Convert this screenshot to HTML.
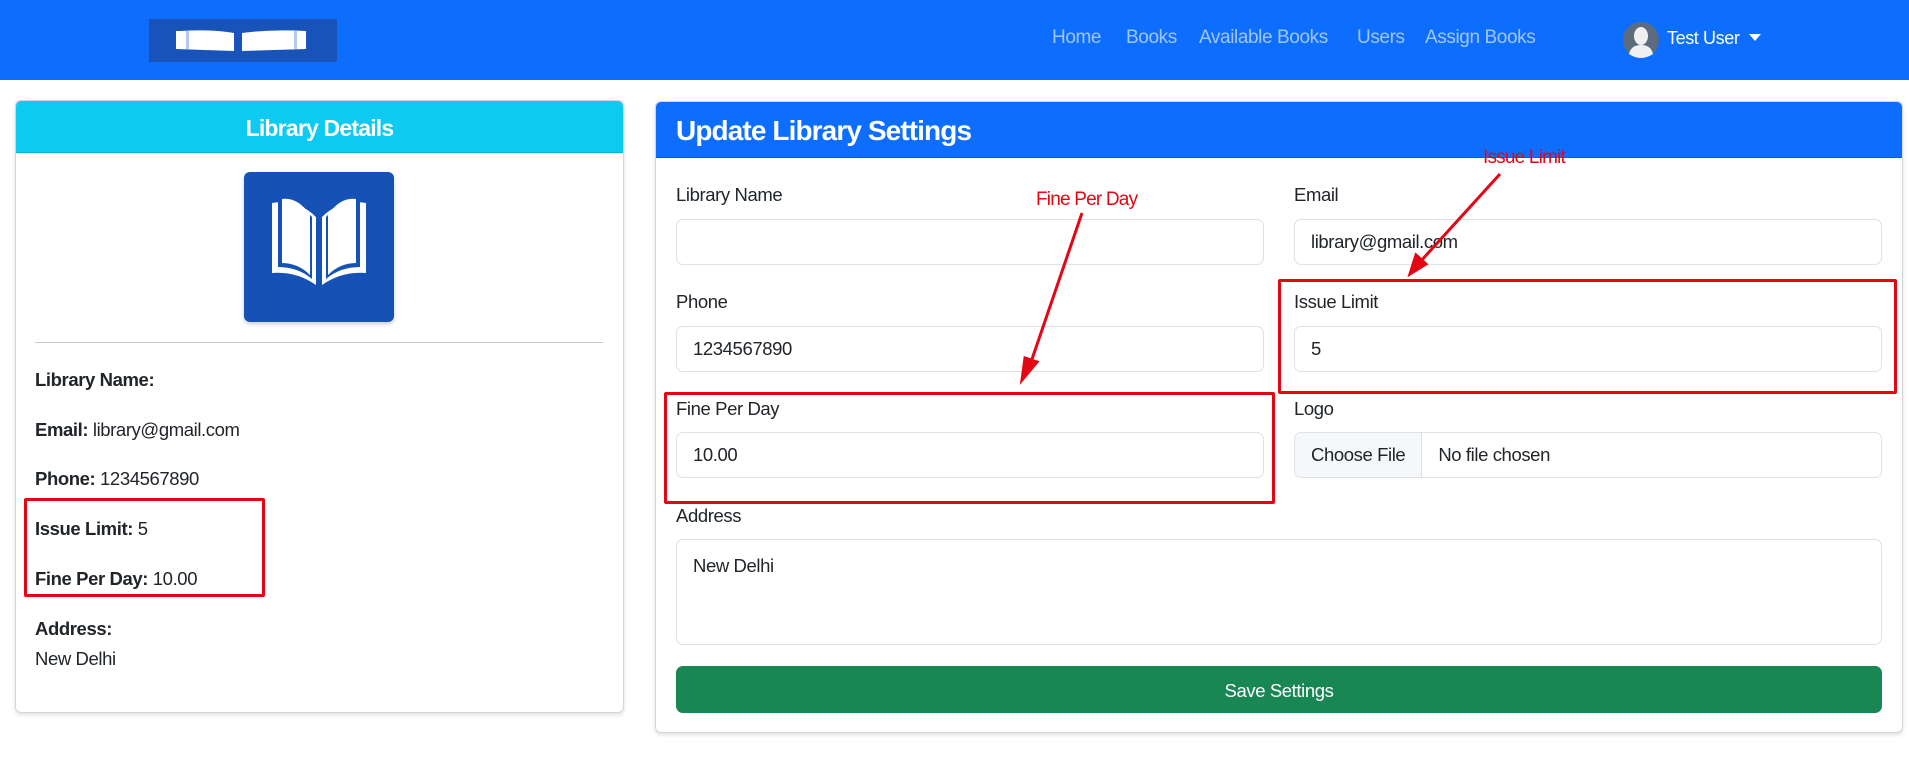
<!DOCTYPE html>
<html><head><meta charset="utf-8"><style>
*{box-sizing:border-box;margin:0;padding:0}
body{width:1909px;height:778px;background:#fff;font-family:"Liberation Sans",sans-serif;color:#212529;position:relative;overflow:hidden;letter-spacing:-0.4px}
.a{position:absolute;white-space:nowrap}
.nav{position:absolute;left:0;top:0;width:1909px;height:80px;background:#0d6efd}
.nl{color:rgba(255,255,255,.6);font-size:19px;top:27px}
.card{position:absolute;border:1px solid #d6d6d6;border-radius:6px;box-shadow:0 2px 4px rgba(0,0,0,.12);overflow:hidden;background:#fff}
.lbl{font-size:18.5px}
.inp{position:absolute;border:1px solid #dee2e6;border-radius:7px;background:#fff;font-size:18.5px;padding-left:16px;display:flex;align-items:center}
.rb{position:absolute;border:3px solid #e30613;border-radius:2px}
.d{font-size:18.5px;left:35px}
.d b{font-weight:bold}
.red{color:#e30613;font-size:19px;letter-spacing:-0.8px}
</style></head><body>
<div class="nav"></div>
<div class="a" style="left:149px;top:19px;width:188px;height:43px;background:#1753b8"></div>
<svg class="a" style="left:172px;top:27px" width="140" height="26" viewBox="0 0 140 26"><path d="M4 4 L4 22 L62 24 L62 6 Q40 2 8 4Z" fill="#fff"/><path d="M70 6 L70 24 L134 22 L134 4 Q100 2 70 6Z" fill="#fff"/><rect x="14" y="4" width="3" height="18" fill="#b8c8ee"/><rect x="122" y="4" width="3" height="18" fill="#b8c8ee"/></svg>
<div class="a nl" style="left:1052px">Home</div>
<div class="a nl" style="left:1126px">Books</div>
<div class="a nl" style="left:1199px">Available Books</div>
<div class="a nl" style="left:1357px">Users</div>
<div class="a nl" style="left:1425px">Assign Books</div>
<svg class="a" style="left:1623px;top:22px" width="36" height="36" viewBox="0 0 36 36"><circle cx="18" cy="18" r="18" fill="#5d6b7e"/><ellipse cx="18" cy="14" rx="7" ry="9" fill="#f0f0f0"/><path d="M6 32 Q8 23 18 23 Q28 23 30 32 Q24 36 18 36 Q12 36 6 32Z" fill="#f0f0f0"/></svg>
<div class="a" style="left:1667px;top:28px;color:#fff;font-size:18px">Test User</div>
<div class="a" style="left:1749px;top:34px;width:0;height:0;border-left:6px solid transparent;border-right:6px solid transparent;border-top:7px solid #fff"></div>

<div class="card" style="left:15px;top:100px;width:609px;height:613px">
<div style="height:52px;background:#0dcaf0;border-bottom:1px solid #0bb5d8;color:#fff;font-weight:bold;font-size:23px;text-align:center;line-height:54px;letter-spacing:-0.8px">Library Details</div>
</div>
<div class="a" style="left:244px;top:172px;width:150px;height:150px;background:#1652b5;border-radius:6px;box-shadow:0 2px 4px rgba(0,0,0,.2)"></div>
<svg class="a" style="left:264px;top:195px" width="110" height="96" viewBox="0 0 110 96"><path d="M8 8 L8 78 Q32 76 52 90 L52 22 Q34 4 8 8Z" fill="#fff"/><path d="M102 8 L102 78 Q78 76 58 90 L58 22 Q76 4 102 8Z" fill="#fff"/><path d="M14 6 L14 72 Q34 72 48 84 L48 22 Q34 6 14 6Z" fill="#1652b5"/><path d="M96 6 L96 72 Q76 72 62 84 L62 22 Q76 6 96 6Z" fill="#1652b5"/><path d="M18 4 L18 68 Q34 68 46 80 L46 20 Q34 2 18 4Z" fill="#fff"/><path d="M92 4 L92 68 Q76 68 64 80 L64 20 Q76 2 92 4Z" fill="#fff"/></svg>
<div class="a" style="left:35px;top:342px;width:568px;height:1px;background:#c8c8c8"></div>
<div class="a d" style="top:369px"><b>Library Name:</b></div>
<div class="a d" style="top:419px"><b>Email:</b> library@gmail.com</div>
<div class="a d" style="top:468px"><b>Phone:</b> 1234567890</div>
<div class="a d" style="top:518px"><b>Issue Limit:</b> 5</div>
<div class="a d" style="top:568px"><b>Fine Per Day:</b> 10.00</div>
<div class="a d" style="top:618px"><b>Address:</b></div>
<div class="a d" style="top:648px">New Delhi</div>
<div class="rb" style="left:24px;top:498px;width:241px;height:99px"></div>

<div class="card" style="left:655px;top:101px;width:1248px;height:632px">
<div style="height:56px;background:#0d6efd;border-bottom:1px solid #0b5ed7"></div>
</div>
<div class="a" style="left:676px;top:115px;color:#fff;font-weight:bold;font-size:28px;letter-spacing:-0.9px">Update Library Settings</div>
<div class="a lbl" style="left:676px;top:184px">Library Name</div>
<div class="inp" style="left:676px;top:219px;width:588px;height:46px"></div>
<div class="a lbl" style="left:1294px;top:184px">Email</div>
<div class="inp" style="left:1294px;top:219px;width:588px;height:46px">library@gmail.com</div>
<div class="a lbl" style="left:676px;top:291px">Phone</div>
<div class="inp" style="left:676px;top:326px;width:588px;height:46px">1234567890</div>
<div class="a lbl" style="left:1294px;top:291px">Issue Limit</div>
<div class="inp" style="left:1294px;top:326px;width:588px;height:46px">5</div>
<div class="a lbl" style="left:676px;top:398px">Fine Per Day</div>
<div class="inp" style="left:676px;top:432px;width:588px;height:46px">10.00</div>
<div class="a lbl" style="left:1294px;top:398px">Logo</div>
<div class="inp" style="left:1294px;top:432px;width:588px;height:46px;padding:0;overflow:hidden"><span style="background:#f6f7f8;border-right:1px solid #dee2e6;height:100%;display:flex;align-items:center;padding:0 16px">Choose File</span><span style="padding-left:16px">No file chosen</span></div>
<div class="a lbl" style="left:676px;top:505px">Address</div>
<div class="inp" style="left:676px;top:539px;width:1206px;height:106px;align-items:flex-start;padding-top:15px">New Delhi</div>
<div class="a" style="left:676px;top:666px;width:1206px;height:47px;background:#198754;border-radius:7px;color:#fff;font-size:18.5px;text-align:center;line-height:49px">Save Settings</div>

<div class="rb" style="left:664px;top:392px;width:611px;height:112px"></div>
<div class="rb" style="left:1278px;top:279px;width:619px;height:115px"></div>
<div class="a red" style="left:1036px;top:189px">Fine Per Day</div>
<div class="a red" style="left:1483px;top:147px">Issue Limit</div>
<svg class="a" style="left:0;top:0" width="1909" height="778"><g stroke="#e30613" stroke-width="3" fill="#e30613"><line x1="1082" y1="213" x2="1030" y2="365"/><path d="M1022 380 L1025 358 L1037 362Z"/><line x1="1500" y1="174" x2="1420" y2="262"/><path d="M1410 274 L1416 255 L1426 264Z"/></g></svg>
</body></html>
